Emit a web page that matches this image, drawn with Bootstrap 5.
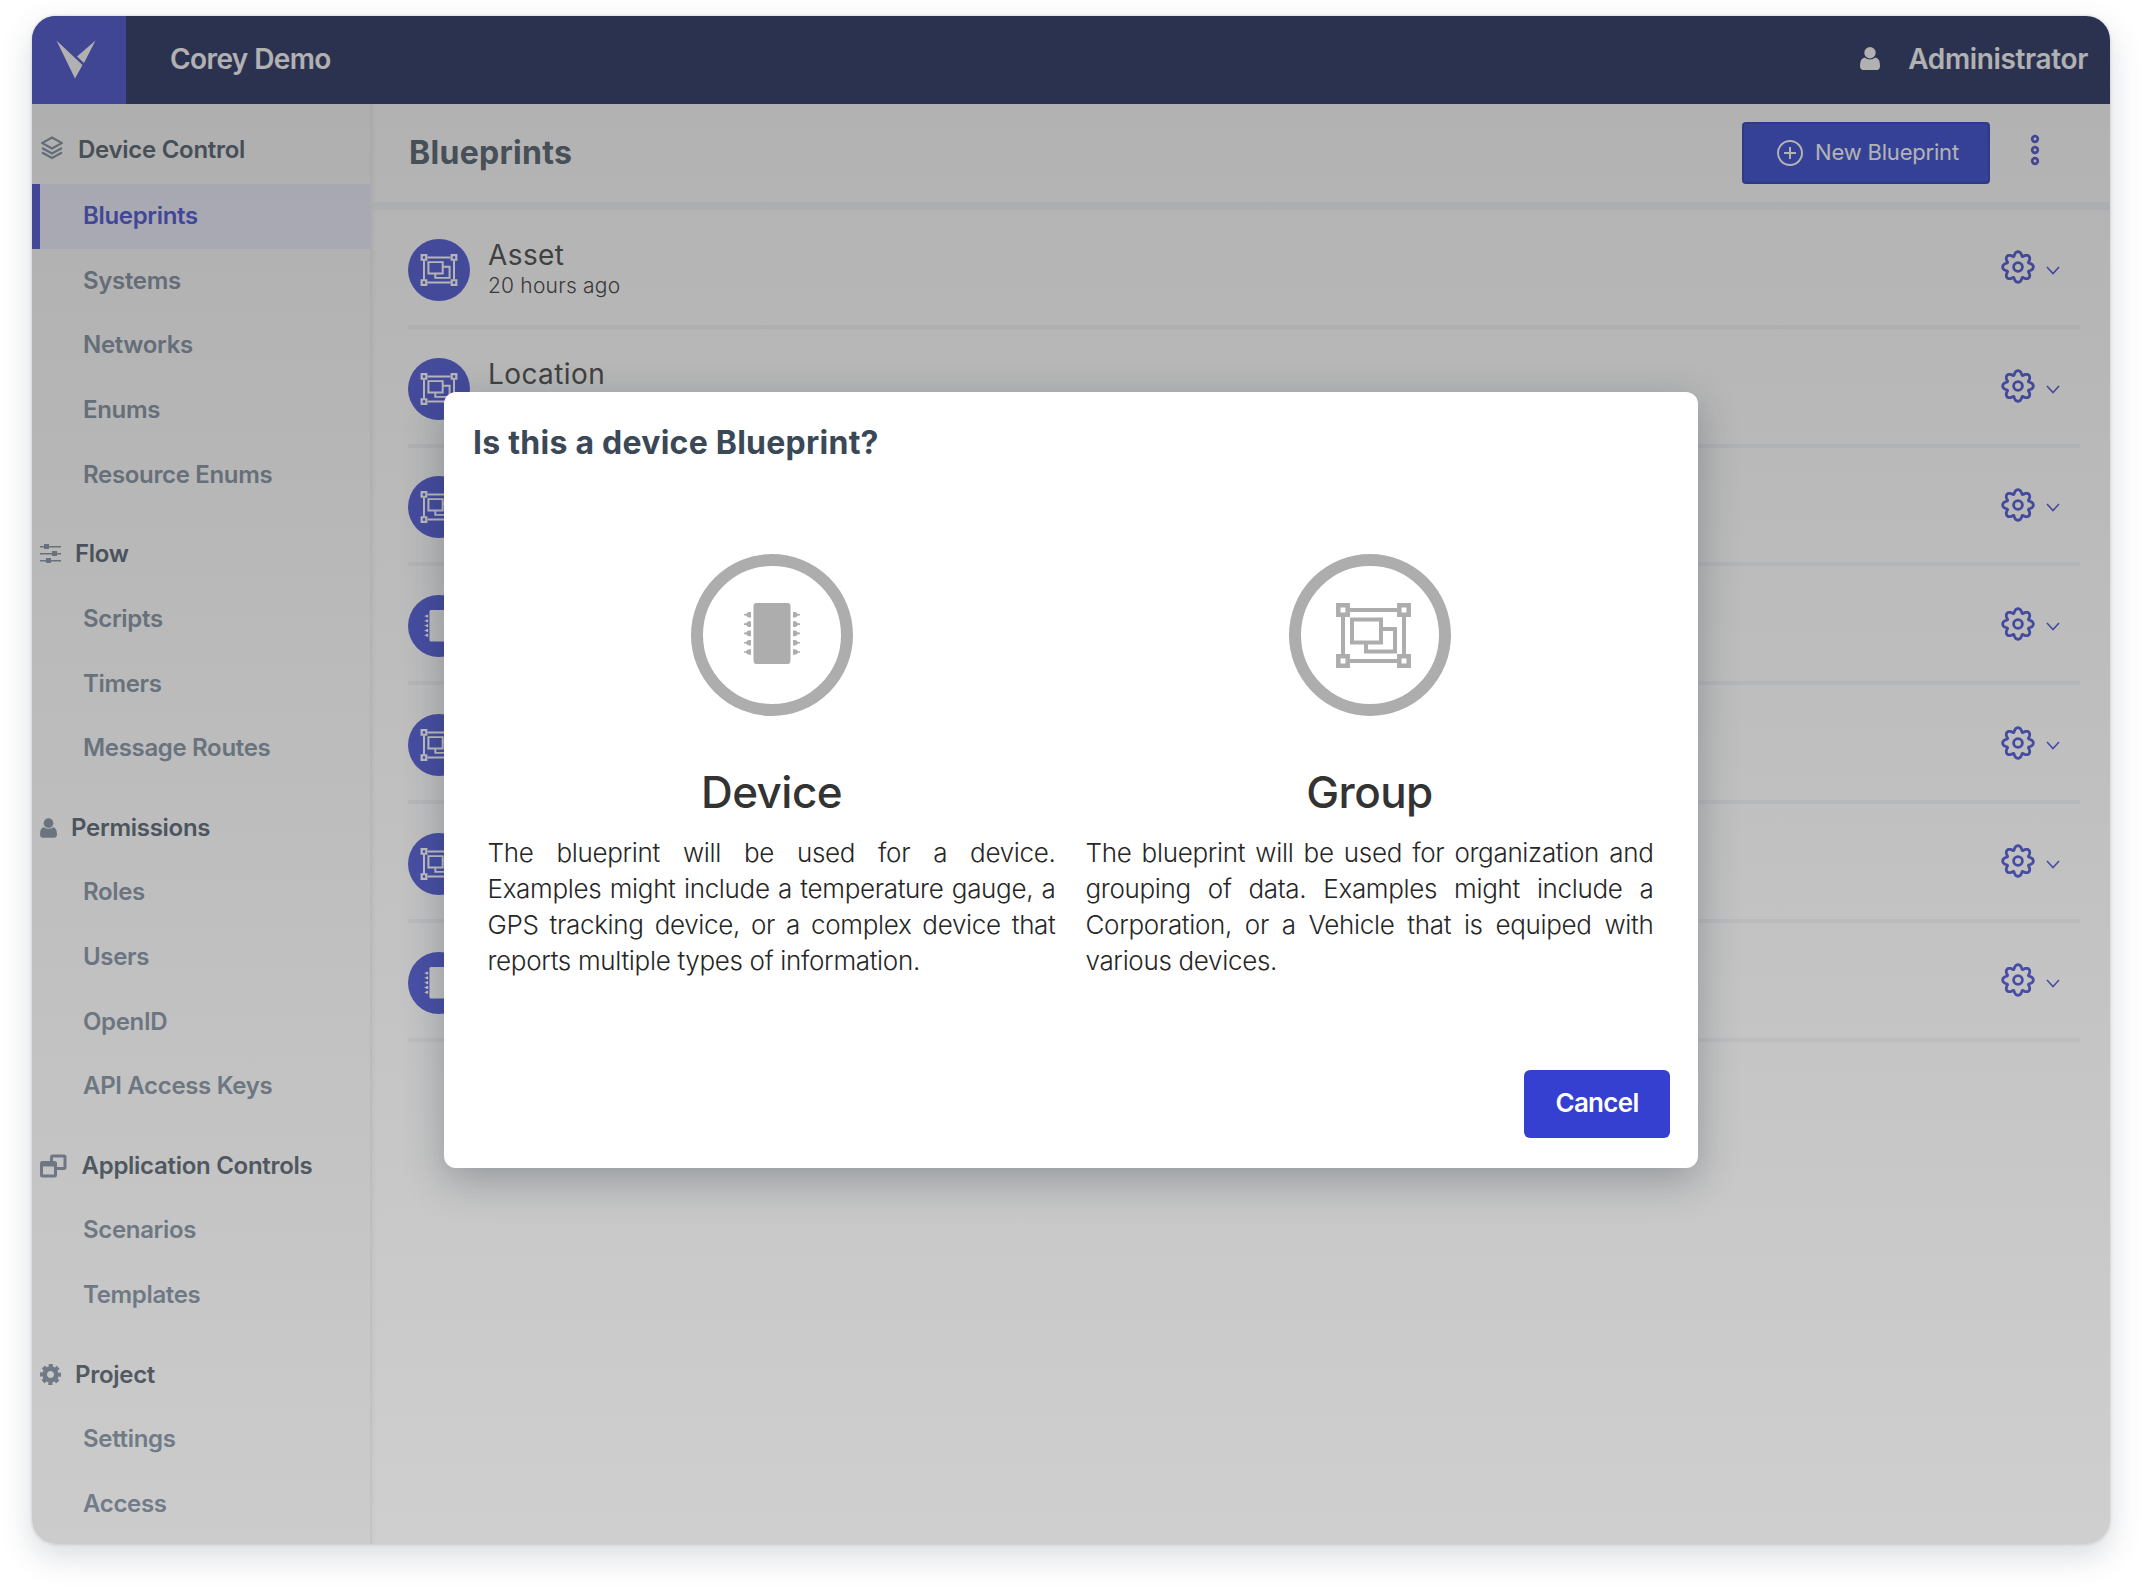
<!DOCTYPE html>
<html lang="en">
<head>
<meta charset="utf-8">
<title>Blueprints</title>
<link href="https://cdn.jsdelivr.net/npm/bootstrap@5.3.0/dist/css/bootstrap.min.css" rel="stylesheet">
<style>
body{font-family:Inter,"Liberation Sans",sans-serif;background:#fff;width:2142px;height:1592px;overflow:hidden;padding:16px 32px 48px}
.shell{width:2078px;height:1528px;border-radius:24px;overflow:hidden;position:relative;background:#fff}
.shell-shadow{border-radius:24px;width:2078px;height:1528px;box-shadow:0 0 3px rgba(60,70,80,.25),0 12px 32px rgba(60,75,90,.2)}
.topbar{height:88px;background:#3e4873;color:#fff;font-size:28px;font-weight:600;letter-spacing:-.35px}
.brandbox{width:94px;height:88px;background:#5c65d4}
.project-name{margin-left:44px;padding-bottom:3px;letter-spacing:-.6px}
.account{margin-right:22px;padding-bottom:3px;gap:28px}
.sidebar{width:338px;background:#fbfbfb;padding-top:15.4px;border-right:2px solid #f2f2f2;box-shadow:2px 0 4px rgba(0,0,0,.04);box-sizing:content-box}
.side-head{height:64.6px;font-size:24px;font-weight:600;letter-spacing:-.28px;color:#65707c;padding:0 0 0 8px}
.side-head svg{color:#8c99a8}
.side-head:first-child{padding-bottom:4px}
.side-head:first-child svg{margin:0 0 3px 1px}
.side-item{height:64.600px;font-size:24px;font-weight:600;letter-spacing:-.33px;color:#8c99a8;padding:0 0 0 51px;text-decoration:none}
.side-item.current{color:#5c65d4;background:#efeffd;border-left:8px solid #5c65d4;padding-left:43px}
.gap-head{margin-top:15.100px}
.pagehead{height:106px;border-bottom:8px solid #f4f7fa;padding:0 70px 0 37px}
.pagetitle{font-size:32px;font-weight:700;letter-spacing:.3px;color:#65707c}
.newbtn{width:248px;height:62px;border-radius:4px;border:2px solid #4352c0;background:#4b5dd6;color:#fff;font-size:22px;letter-spacing:-.2px}
.newbtn svg{margin:0 12px 0 4px}
.newbtn span{padding-bottom:1px}
.moredots{margin:0 0 6px 40px}
.rowline{height:118.8px;border-bottom:4px solid #f3f5f8;margin:0 30px 0 36px;padding-right:20px}
.disc{width:62px;height:62px;border-radius:50%;background:#5f68d8;color:#fff;margin-top:5px}
.rowlabel{margin:3px 0 0 18px}
.rowname{font-size:28px;line-height:34px;letter-spacing:.4px;color:#5a5a5a}
.rowtime{font-size:21px;line-height:27px;letter-spacing:.2px;color:#505050;font-weight:300}
.caret{margin:6px 0 0 11px}
.veil{position:absolute;inset:0;background:linear-gradient(rgba(0,0,0,.31),rgba(0,0,0,.19));padding:376px 412px}
.dialogbox{width:1254px;height:776px;border-radius:12px;background:#fff;box-shadow:0 12px 40px rgba(20,35,50,.29);padding:31px 28px 30px}
.dialogtitle{font-size:32px;line-height:40px;font-weight:700;letter-spacing:.25px;color:#3a4857;padding-left:1px}
.choices{gap:30px;margin:91px 16px 0 15.500px}
.choice{width:568px}
.ring{width:162px;height:162px;border:12px solid #adadad;border-radius:50%;color:#adadad}
.ring .chip-art{margin-bottom:3px}
.ring .group-art{margin-left:7px}
.choicename{font-size:44px;font-weight:500;line-height:52px;letter-spacing:-.55px;color:#333;margin-top:50px}
.choicetext{font-size:26px;font-weight:300;line-height:36px;letter-spacing:-.33px;color:#262626;text-align:justify;margin-top:17px}
.cancelbtn{width:146px;height:68px;border-radius:6px;background:#3540d0;color:#fff;font-size:26px;font-weight:600;letter-spacing:-.7px}
.cancelbtn span{display:block;padding-bottom:3px}
</style>
</head>
<body>
<svg width="0" height="0" class="position-absolute">
<defs>
<symbol id="group" viewBox="0 0 75 65"><g fill="none" stroke="currentColor" stroke-width="4"><path d="M14 7H61M14 58H61M7 13V52M68 13V52"/><path stroke-width="4.5" d="M2.3 2.3h9.4v9.4H2.3zM63.3 2.3h9.4v9.4h-9.4zM2.3 53.3h9.4v9.4H2.3zM63.3 53.3h9.4v9.4h-9.4z"/><path d="M16 16.500h29v23H16zM46 26h13v22.500H30V40"/></g></symbol>
<symbol id="chip" viewBox="0 0 56 62"><g fill="currentColor"><rect x="9.500" y="0" width="37" height="61" rx="3"/><path id="legs" d="M0 11H2Q3.500 9 5 9H7V14.600H5Q3.500 14.600 2 12.600H0z"/><use href="#legs" y="9.300"/><use href="#legs" y="18.600"/><use href="#legs" y="27.900"/><use href="#legs" y="37.200"/><g transform="matrix(-1 0 0 1 56 0)"><use href="#legs"/><use href="#legs" y="9.300"/><use href="#legs" y="18.600"/><use href="#legs" y="27.900"/><use href="#legs" y="37.200"/></g></g></symbol>
<symbol id="gear" viewBox="0 0 34 34"><g fill="none" stroke="#5c65d4" stroke-width="2.800" transform="translate(17 17)"><circle r="4.400"/><path id="gearedge" stroke-linejoin="round"/></g></symbol>
<symbol id="user" viewBox="0 0 20 23"><g fill="currentColor"><circle cx="10" cy="5.800" r="5.700"/><path d="M4.500 10.500Q10 14.500 15.500 10.500Q20 11.500 20 18.500Q20 23 16.500 23H3.500Q0 23 0 18.500Q0 11.500 4.500 10.500z"/></g></symbol>
</defs></svg>
<div class="shell-shadow">
<div class="shell d-flex flex-column">
  <header class="topbar d-flex align-items-center">
    <div class="brandbox"><svg width="94" height="88" fill="#fff"><path d="M24.500 24.500L50.500 49L43 62.500zM63.500 24.500L52 47L45 40.500z"/></svg></div>
    <span class="project-name">Corey Demo</span>
    <div class="account ms-auto d-flex align-items-center"><svg width="20" height="23"><use href="#user"/></svg>Administrator</div>
  </header>
  <div class="d-flex flex-grow-1 overflow-hidden">
    <nav class="sidebar flex-shrink-0" id="side"></nav>
    <main class="flex-grow-1">
      <div class="pagehead d-flex align-items-center">
        <span class="pagetitle me-auto">Blueprints</span>
        <button class="newbtn d-flex align-items-center justify-content-center p-0"><svg width="26" height="26" fill="none" stroke="#fff" stroke-width="2"><circle cx="13" cy="13" r="12"/><path d="M7 13h12M13 7v12"/></svg><span>New Blueprint</span></button>
        <svg class="moredots" width="10" height="32" fill="none" stroke="#5c65d4" stroke-width="2.700"><circle cx="5" cy="5" r="2.800"/><circle cx="5" cy="16" r="2.800"/><circle cx="5" cy="27" r="2.800"/></svg>
      </div>
      <div id="rows"></div>
    </main>
  </div>
  <div class="veil">
    <section class="dialogbox d-flex flex-column" role="dialog">
      <div class="dialogtitle">Is this a device Blueprint?</div>
      <div class="choices d-flex">
        <div class="choice d-flex flex-column align-items-center"><div class="ring d-flex align-items-center justify-content-center"><svg class="chip-art" width="56" height="62"><use href="#chip"/></svg></div><div class="choicename">Device</div><div class="choicetext">The blueprint will be used for a device. Examples might include a temperature gauge, a GPS tracking device, or a complex device that reports multiple types of information.</div></div>
        <div class="choice d-flex flex-column align-items-center"><div class="ring d-flex align-items-center justify-content-center"><svg class="group-art" width="75" height="65"><use href="#group"/></svg></div><div class="choicename">Group</div><div class="choicetext">The blueprint will be used for organization and grouping of data. Examples might include a Corporation, or a Vehicle that is equiped with various devices.</div></div>
      </div>
      <button class="cancelbtn btn mt-auto align-self-end p-0"><span>Cancel</span></button>
    </section>
  </div>
</div>
</div>
<script src="https://cdn.jsdelivr.net/npm/bootstrap@5.3.0/dist/js/bootstrap.bundle.min.js"></script>
<script>
// Eight-lobed outline of the settings gear
let edge='';
for(let k=0;k<160;k++){const t=k*Math.PI/80,c=Math.cos(8*t),r=13.3+2*c,a=t+.05*Math.sin(8*t);edge+=(k?'L':'M')+(r*Math.sin(a)).toFixed(2)+' '+(-r*Math.cos(a)).toFixed(2);}
document.getElementById('gearedge').setAttribute('d',edge+'Z');
const icons={
layers:'<svg width="22" height="24" viewBox="0 0 22 24" fill="none" stroke="currentColor" stroke-width="2"><path d="M11 1.500L21 7L11 12.500L1 7zM1 12L11 17.500L21 12M1 16.500L11 22L21 16.500"/></svg>',
flow:'<svg width="21" height="20" viewBox="0 0 21 20" fill="currentColor"><path d="M0 2h21v1.500H0zM0 9h21v1.500H0zM0 16h21v1.500H0zM4 0h5v5H4zM12 7h5v5h-5zM6 14h5v5H6z"/></svg>',
user:'<svg width="17" height="20"><use href="#user"/></svg>',
app:'<svg width="27" height="24" viewBox="0 0 27 24" fill="none" stroke="currentColor" stroke-width="3"><rect x="1.500" y="8.500" width="14" height="13.500" rx="1"/><path d="M1.500 11H15M11.500 9V3Q11.500 2 12.500 2H24Q25 2 25 3V13.500Q25 14.500 24 14.500H16"/></svg>',
cog:'<svg width="21" height="21" viewBox="-10.500 -10.500 21 21" fill="none" stroke="currentColor"><circle r="5.900" stroke-width="4.800"/><circle r="9" stroke-width="3" stroke-dasharray="4.200 2.869" stroke-dashoffset="2.100"/></svg>'};
const menu=[['layers',15,'Device Control',['Blueprints','Systems','Networks','Enums','Resource Enums']],['flow',14,'Flow',['Scripts','Timers','Message Routes']],['user',14,'Permissions',['Roles','Users','OpenID','API Access Keys']],['app',14.5,'Application Controls',['Scenarios','Templates']],['cog',14,'Project',['Settings','Access']]];
document.getElementById('side').innerHTML=menu.map(([i,g,t,a],n)=>`<div class="side-head d-flex align-items-center ${n?'gap-head':''}" style="column-gap:${g}px">${icons[i]}<span>${t}</span></div>`+a.map(x=>`<a class="side-item d-flex align-items-center ${x=='Blueprints'?'current':''}">${x}</a>`).join('')).join('');
const rows=[['group','Asset'],['group','Location'],['group'],['chip'],['group'],['group'],['chip']];
document.getElementById('rows').innerHTML=rows.map(([k,n],i)=>`<div class="rowline d-flex align-items-center"><div class="disc d-flex align-items-center justify-content-center"><svg width="38" height="32"><use href="#${k}"/></svg></div><div class="rowlabel me-auto"><div class="rowname">${n||''}</div><div class="rowtime">${i?'':'20 hours ago'}&nbsp;</div></div><svg width="34" height="34"><use href="#gear"/></svg><svg class="caret" width="14" height="9" fill="none" stroke="#5c65d4" stroke-width="1.600"><path d="M1 1L7 7.500L13 1"/></svg></div>`).join('');
</script>
</body>
</html>
